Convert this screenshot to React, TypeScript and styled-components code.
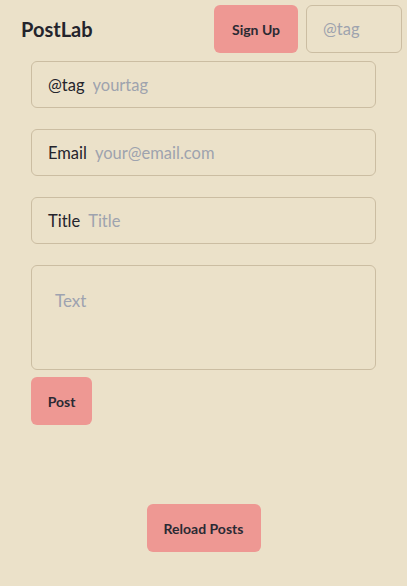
import React from "react";
import styled, { createGlobalStyle } from "styled-components";

const Global = createGlobalStyle`
  html, body { margin: 0; padding: 0; background: #ebe1c9; }
  body { font-family: Lato, "Open Sans", sans-serif; color: #24242c; }
  * { box-sizing: border-box; }
`;

const Page = styled.div`
  min-height: 586px;
  background: #ebe1c9;
  display: flex;
  flex-direction: column;
`;

const Header = styled.header`
  display: flex;
  align-items: center;
  justify-content: space-between;
  padding: 5px 5px 0 21px;
`;

const Brand = styled.h1`
  margin: 0;
  font-size: 20px;
  font-weight: 700;
  color: #24242c;
`;

const HeaderRight = styled.div`
  display: flex;
  gap: 8px;
`;

const Button = styled.button<{ $w: number }>`
  width: ${(p) => p.$w}px;
  height: 48px;
  border: none;
  border-radius: 6px;
  background: #ee9893;
  color: #2a2a33;
  font-family: Lato, sans-serif;
  font-weight: 700;
  font-size: 14px;
  padding: 0;
  cursor: pointer;
`;

const TagInput = styled.input`
  width: 96px;
  height: 48px;
  border: 1px solid #cbbda2;
  border-radius: 6px;
  background: transparent;
  padding: 0 16px;
  font-family: Lato, sans-serif;
  font-size: 16.5px;
  &::placeholder { color: #9ea3ae; }
`;

const Form = styled.form`
  margin: 8px 0 0 31px;
  width: 345px;
  display: flex;
  flex-direction: column;
  gap: 21px;
`;

const Field = styled.label`
  height: 47px;
  border: 1px solid #cbbda2;
  border-radius: 6px;
  display: flex;
  align-items: center;
  gap: 8px;
  padding: 0 16px;
  font-size: 16.5px;
  color: #24242c;
`;

const FieldInput = styled.input`
  flex: 1;
  border: none;
  background: transparent;
  outline: none;
  padding: 0;
  font-family: Lato, sans-serif;
  font-size: 16.5px;
  &::placeholder { color: #9ea3ae; }
`;

const TextArea = styled.textarea`
  height: 105px;
  border: 1px solid #cbbda2;
  border-radius: 6px;
  background: transparent;
  padding: 24px 23px;
  resize: none;
  font-family: Lato, sans-serif;
  font-size: 17px;
  &::placeholder { color: #9ea3b0; }
`;

const PostRow = styled.div`
  margin-top: -14px;
`;

const ReloadRow = styled.div`
  display: flex;
  justify-content: center;
  margin-top: 79px;
`;

export default function App() {
  return (
    <Page>
      <Global />
      <Header>
        <Brand>PostLab</Brand>
        <HeaderRight>
          <Button $w={84}>Sign Up</Button>
          <TagInput placeholder="@tag" />
        </HeaderRight>
      </Header>
      <Form onSubmit={(e) => e.preventDefault()}>
        <Field>
          @tag
          <FieldInput placeholder="yourtag" />
        </Field>
        <Field>
          Email
          <FieldInput placeholder="your@email.com" />
        </Field>
        <Field>
          Title
          <FieldInput placeholder="Title" />
        </Field>
        <TextArea placeholder="Text" />
        <PostRow>
          <Button $w={61} type="submit">Post</Button>
        </PostRow>
      </Form>
      <ReloadRow>
        <Button $w={114}>Reload Posts</Button>
      </ReloadRow>
    </Page>
  );
}
